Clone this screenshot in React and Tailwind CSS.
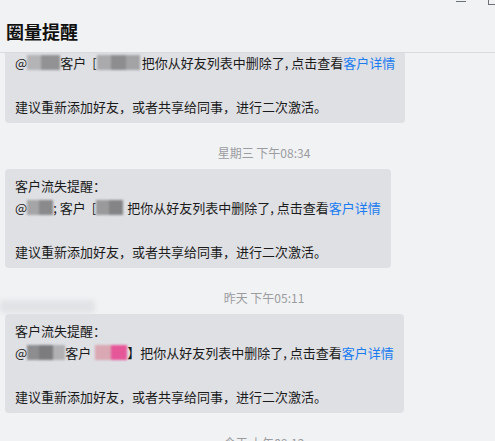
import React from "react";

const font = {
  fontFamily: '"Noto Sans CJK SC", "Noto Sans", sans-serif',
};

// blurred name placeholder
function Mask({ parts, className = "" }) {
  return (
    <span className={"inline-flex h-[15px] align-[-2px] blur-[1px] " + className}>
      {parts.map((p, i) => (
        <span key={i} className={"h-full " + p} />
      ))}
    </span>
  );
}

function Time({ text, blob }) {
  return (
    <div className="relative mt-[21px] mb-[7px] h-[18px] text-center text-[12px] leading-[18px] text-[#9b9ca0]">
      {blob && (
        <div className="absolute left-0 top-[11px] h-[13px] w-[95px] rounded-sm bg-[#e2e3e6] blur-[2px]" />
      )}
      {text}
    </div>
  );
}

function Bubble({ first, line }) {
  return (
    <div
      className={
        "ml-[5px] w-fit bg-[#dfe0e4] px-[10px] pb-[5px] text-[13px] leading-[22px] text-[#1b1b1b] " +
        (first ? "-mt-[1px] rounded-b-[4px] pt-0" : "rounded-[4px] pt-[6px]")
      }
    >
      {!first && <div>客户流失提醒：</div>}
      <div className="whitespace-pre">{line}</div>
      <div className="h-[22px]" />
      <div>建议重新添加好友，或者共享给同事，进行二次激活。</div>
    </div>
  );
}

export default function App() {
  return (
    <div className="relative h-[441px] w-[495px] overflow-hidden bg-[#f1f2f4]" style={font}>
      {/* window controls */}
      <div className="absolute left-[456px] top-[1px] h-[1px] w-[10px] bg-[#6b6f76]" />
      <div className="absolute left-[488px] top-[-5px] h-[10px] w-[10px] border border-[#6b6f76]" />

      {/* HEADER */}
      <div className="h-[53px] border-b border-[#d9dadd] pl-[6px] pt-[19px]">
        <h1 className="text-[18px] font-bold leading-[24px] text-[#111]">圈量提醒</h1>
      </div>

      {/* MESSAGES */}
      <div className="h-[388px] w-[528px] overflow-hidden">
        <Bubble
          first
          line={
            <>
              @<Mask parts={["w-[14px] bg-[#b4b4b6]", "w-[19px] bg-[#929294]"]} />
              客户 <span className="ml-[3px]">[</span>
              <Mask parts={["w-[14px] bg-[#aaaaac]", "w-[15px] bg-[#8d8d90]", "w-[14px] bg-[#a3a3a5]"]} />
              <span className="ml-[2px]">把你从好友列表中删除了, 点击查看</span>
              <span className="text-[#1a7cf0]">客户详情</span>
            </>
          }
        />

        <Time text="星期三 下午08:34" />
        <Bubble
          line={
            <>
              @<Mask parts={["w-[12px] bg-[#a5a5a7]", "w-[14px] bg-[#8a8a8d]"]} />
              ; 客户 <span className="ml-[3px]">[</span>
              <Mask parts={["w-[13px] bg-[#9a9a9c]", "w-[14px] bg-[#848487]"]} />
              <span className="ml-[4px]">把你从好友列表中删除了, 点击查看</span>
              <span className="text-[#1a7cf0]">客户详情</span>
            </>
          }
        />

        <Time text="昨天 下午05:11" blob />
        <Bubble
          line={
            <>
              @<Mask parts={["w-[12px] bg-[#8d8d90]", "w-[14px] bg-[#7c7c7f]", "w-[12px] bg-[#b1b1b4]"]} />
              客户
              <Mask
                className="ml-[4px]"
                parts={["w-[16px] bg-[#d9a8b3]", "w-[16px] bg-[#e6579a]"]}
              />
              】把你从好友列表中删除了, 点击查看
              <span className="text-[#1a7cf0]">客户详情</span>
            </>
          }
        />

        <Time text="今天 上午09:12" />
      </div>
    </div>
  );
}
